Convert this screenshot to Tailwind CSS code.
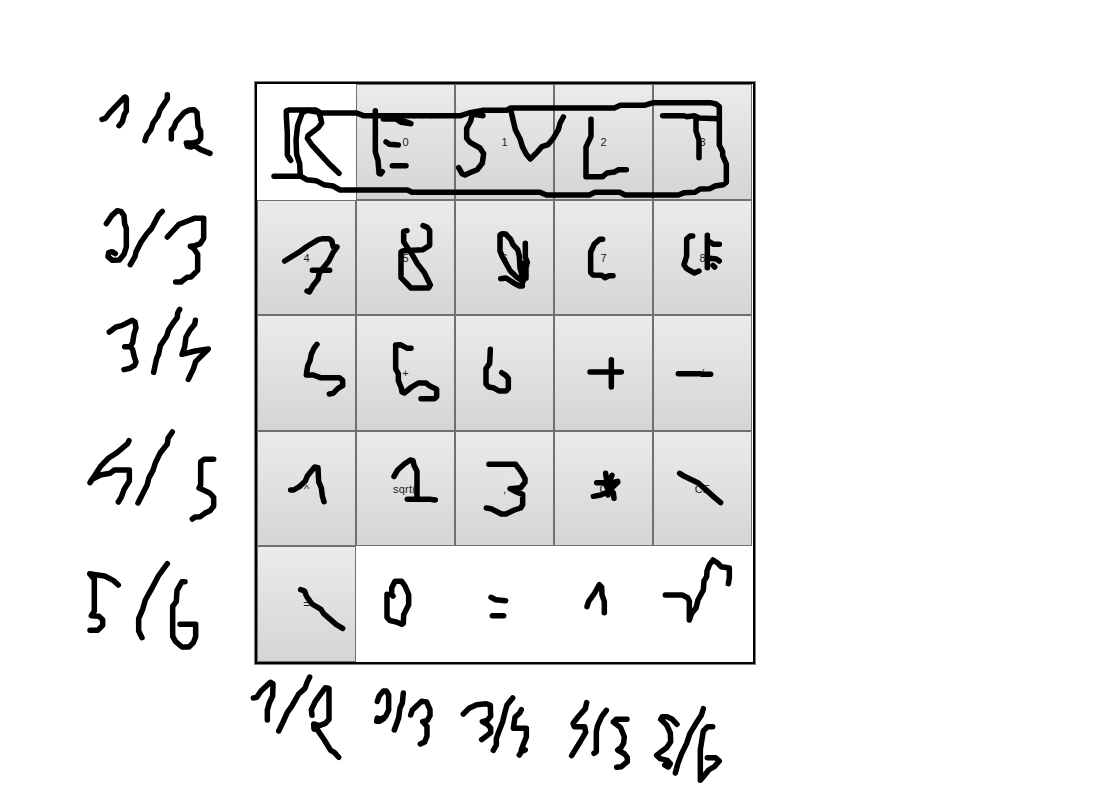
<!DOCTYPE html>
<html lang="en">
<head>
<meta charset="utf-8">
<title>Calculator layout sketch</title>
<script src="https://cdn.jsdelivr.net/npm/@tailwindcss/browser@4"></script>
</head>
<body class="bg-white">
<main class="relative w-[1104px] h-[793px] overflow-hidden pl-[255px] pt-[82px] font-['Liberation_Sans',Arial,sans-serif] text-[11px] leading-none text-[#222]">
  <section class="w-[500px] h-[582px] border-2 border-black outline outline-[#808080]">
    <div class="grid w-[495px] grid-cols-5 grid-rows-[116px_115px_116px_115px_116px] *:flex *:items-center *:justify-center *:border *:border-[#707070] *:bg-linear-to-b *:from-[#ebebeb] *:to-[#d5d5d5] *:pt-px">
      <button class="col-start-2">0</button><button>1</button><button>2</button><button>3</button>
      <button>4</button><button>5</button><button>6</button><button>7</button><button>8</button>
      <button>9</button><button>+</button><button>-</button><button>*</button><button>/</button>
      <button>^</button><button class="tracking-[0.2px] pr-[2px]">sqrt(</button><button>,</button><button>C</button><button>CE</button>
      <button>=</button>
    </div>
  </section>

  <!-- Freehand pen layer; each group is drawn at three units per pixel -->
  <svg class="absolute inset-0 pointer-events-none" width="1104" height="793" viewBox="0 0 1104 793" fill="none" stroke="#000" stroke-width="16.5" stroke-linecap="round" stroke-linejoin="round">
    <g transform="translate(80 80) scale(.33333)">
      <path d="M66 118L76 115L90 97L133 52Q138 49 139 56V94L133 103L127 125L117 137"/>
      <path d="M262 44V57L250 75L240 90L234 108L219 129L213 148L200 166L195 182"/>
      <path d="M274 177V151L282 142L288 126L312 98L328 90L342 89L351 98L354 140L362 154V175L354 185L340 188L319 189L322 199L333 201L342 196L362 209L390 220M324 194L333 194"/>
      <path d="M79 431L95 407L112 392L124 395L132 407L134 432L139 445V501L132 523L118 540L97 541L84 530L86 518L96 515L106 521"/>
      <path d="M247 394L236 405L215 445L200 462L182 488L168 516L165 530L151 554"/>
      <path d="M262 471L297 433L323 423L343 415H371V475L361 491L345 497L331 499L341 505L353 523V571L333 591L321 592L303 606H287"/>
      <path d="M88 756L108 741L125 737L157 721L165 726L168 744L162 762L158 788L151 800H134H151L158 809L163 831L168 846L164 856L149 865L132 869"/>
      <path d="M299 688L293 699L292 712L278 731L266 749L260 769L241 797L236 822L230 835L225 858L221 877"/>
      <path d="M346 721L344 733L330 750L318 771L314 801L306 823L345 813L385 807L347 845L340 867L325 898"/>
    </g>
    <g transform="translate(80 420) scale(.33333)">
      <path d="M147 62L143 71L111 98L86 114L61 140L30 188L35 179L61 165L90 160L103 150H148V183L132 209L124 231L115 246"/>
      <path d="M277 36L264 55L262 72L241 98L226 129L219 151L207 173L201 196L174 249"/>
      <path d="M401 118H372L362 126V194L357 204L389 219L401 232V259L390 272L374 280L361 290L345 291L337 297"/>
      <path d="M115 495L101 482L74 468L47 464L29 461L43 478V573L34 587L57 589L68 599V616L53 631H30"/>
      <path d="M262 431L235 468L215 506L196 540L188 568L176 596V633L186 653"/>
      <path d="M315 485H306L291 511L289 544L278 559V649L287 665L306 681H327L340 668L347 650V613H300"/>
    </g>
    <g transform="translate(250 75) scale(.33333)">
      <path d="M122 256L112 240V174L109 124V108L119 105H198L213 114H320L340 122H470H632L656 114L697 106H770L781 99H1093L1111 91H1183L1210 83H1380L1398 87L1408 95V210L1418 230V242L1429 267V322L1420 329L1395 333L1380 341L1350 342L1335 352L1303 353L1285 360H1125L1110 352H1035L1018 360H889L870 352H486L472 345H270L249 333L221 329L198 317L170 314L153 304H72"/>
      <path d="M151 303L149 266L140 238L138 195L143 151L157 113L172 106L205 112L211 125L215 144L205 158L174 182L172 190L184 208L234 263L267 295"/>
      <path d="M376 107V231L384 256L387 295L392 297L397 290M400 132H438L454 142L483 146L438 130M408 201L419 208L445 210M427 272H468"/>
      <path d="M479 119L492 125L505 119L518 125L531 119L544 125L557 119L570 125L583 119" stroke-width="10"/>
      <path d="M699 122L672 118L665 124L662 138L650 160V190L660 202L690 219L701 236L697 264L682 284L663 292L645 300L636 296L626 278"/>
      <path d="M782 103L788 130L796 164L810 191L818 217L829 238L841 252L860 233L876 215L894 209L911 188L925 164L930 145L940 126"/>
      <path d="M1023 133V184L1008 216V305H1058L1071 294L1094 291L1106 284H1129"/>
      <path d="M1238 122H1300L1310 125L1333 122L1348 129L1407 131M1338 130V168L1347 195V248"/>
    </g>
    <g transform="translate(250 195) scale(.33333)">
      <path d="M104 198L151 169L173 153L205 134L219 131H237L245 137L250 156H261L250 171L236 199L220 218L207 236L204 253L191 269L178 291L171 288M187 226H239"/>
      <path d="M471 107L461 109V140L475 162L488 181L502 206L523 233L541 270L536 279H483L453 248V171L460 167L519 164L539 151V106L532 97L519 92"/>
      <path d="M752 251L768 249L793 265L808 273H817V258L800 246L781 228L757 185L750 168V120L757 116L767 117L782 133L789 149L803 164L808 183L810 219L819 250H828V218L832 202L826 187V145M820 205V257"/>
      <path d="M1058 133H1049L1033 147L1022 171V232L1029 240L1055 241L1065 248L1077 242H1089"/>
      <path d="M1328 123H1320L1310 132L1310 183L1302 209L1310 221L1333 234L1347 228M1372 121V218M1378 140L1391 148H1408M1380 190L1399 192L1408 198M1389 211L1394 216"/>
    </g>
    <g transform="translate(250 315) scale(.33333)">
      <path d="M201 88L193 98L184 117L180 137L173 153L169 180H190L211 188H268L278 196V212L264 220L249 235L238 237"/>
      <path d="M483 100H472L451 89L437 90V162L445 176V197L454 219L456 231L463 234L485 216L505 204H528L541 214L560 223V245L554 251H513"/>
      <path d="M721 103L719 145L708 161V207L716 216L730 218L747 228H768L775 221V190L767 181L755 173"/>
      <path d="M1020 171H1065M1065 171H1114M1084 134V216M1285 176H1350L1356 178H1382"/>
    </g>
    <g transform="translate(250 430) scale(.33333)">
      <path d="M122 180H131L148 170L166 153L172 138L194 111L204 113L206 155L214 174L217 198L222 215"/>
      <path d="M432 139L443 120L463 102L481 90L489 92L492 106L501 124V205M472 208H539L556 210"/>
      <path d="M717 103H797L812 123L825 145L825 157L812 173L780 176L797 185L818 193V224L812 234L793 240L768 252H754L737 243L723 236L709 234"/>
      <path d="M1040 158H1085L1103 154M1067 130L1074 180V195M1086 136L1070 170M1030 199L1052 195L1073 186L1103 157M1078 177L1090 188L1092 205"/>
      <path d="M1289 130L1303 139L1345 159L1374 185L1394 203L1412 218"/>
    </g>
    <g transform="translate(250 545) scale(.33333)">
      <path d="M152 134L164 138L169 153L186 177L213 193L221 206L259 239L278 250"/>
      <path d="M429 153L425 149V129L435 109H455L465 123L476 149V179L461 209L460 235L455 238L439 231L420 227L411 217V148"/>
      <path d="M723 157L737 164L767 167M727 212H761M1011 185L1016 169L1034 144L1048 119L1055 127L1056 150L1063 169V203"/>
      <path d="M1246 150H1297L1313 158L1318 168V225L1325 205L1338 189L1344 165L1360 135L1362 108L1370 95L1371 78L1379 58L1389 45L1404 55L1413 65L1438 69V99L1435 116"/>
    </g>
    <g transform="translate(240 670) scale(.33333)">
      <path d="M40 84L50 82L63 63L91 37L99 41L98 78L88 99L82 120V150"/>
      <path d="M209 21L201 38L195 55L176 72L155 109L142 127L130 154L116 183"/>
      <path d="M216 136L214 119L226 94L256 53L267 55V148L256 160L238 167L221 162L222 177L232 179L253 210L272 241L284 248L296 262"/>
      <path d="M412 94L418 77L430 63H439L446 75V120L437 139L422 148L412 144L410 154H418L431 146"/>
      <path d="M490 69L487 99L480 114L476 144L463 180M512 135L517 120L545 94L560 96L570 119V137L562 151L548 155L561 169V198L554 216L541 222"/>
      <path d="M670 132L687 115L710 104L739 101L751 106L752 139L742 151L727 155L743 164L752 174V188L742 196L725 209"/>
      <path d="M818 84L801 105L794 130L788 155L776 186L769 206V225L760 241M844 119L839 129L825 142L820 175L859 175V201L849 226L844 240H856L845 244L838 255"/>
      <path d="M1040 98L1036 116L1014 141L999 160L1003 170H1034L1037 187L1022 213L995 257M1099 121L1085 140L1073 166L1069 185V245L1062 250"/>
      <path d="M1161 148H1128L1120 156L1142 173L1153 200L1151 219L1143 233L1133 240L1154 252L1162 263V275L1144 290L1130 292"/>
      <path d="M1311 163L1297 148L1281 140H1267L1262 148L1280 165L1291 189L1292 215L1280 233L1262 246L1250 256L1260 266L1282 271L1291 281L1285 291L1274 285"/>
      <path d="M1390 116L1384 136L1368 160L1350 190L1340 220L1324 253L1314 280L1306 309M1418 170H1403L1390 183L1381 239V331L1393 317L1406 300L1423 290L1438 273L1427 263H1402"/>
    </g>
  </svg>
</main>
</body>
</html>
